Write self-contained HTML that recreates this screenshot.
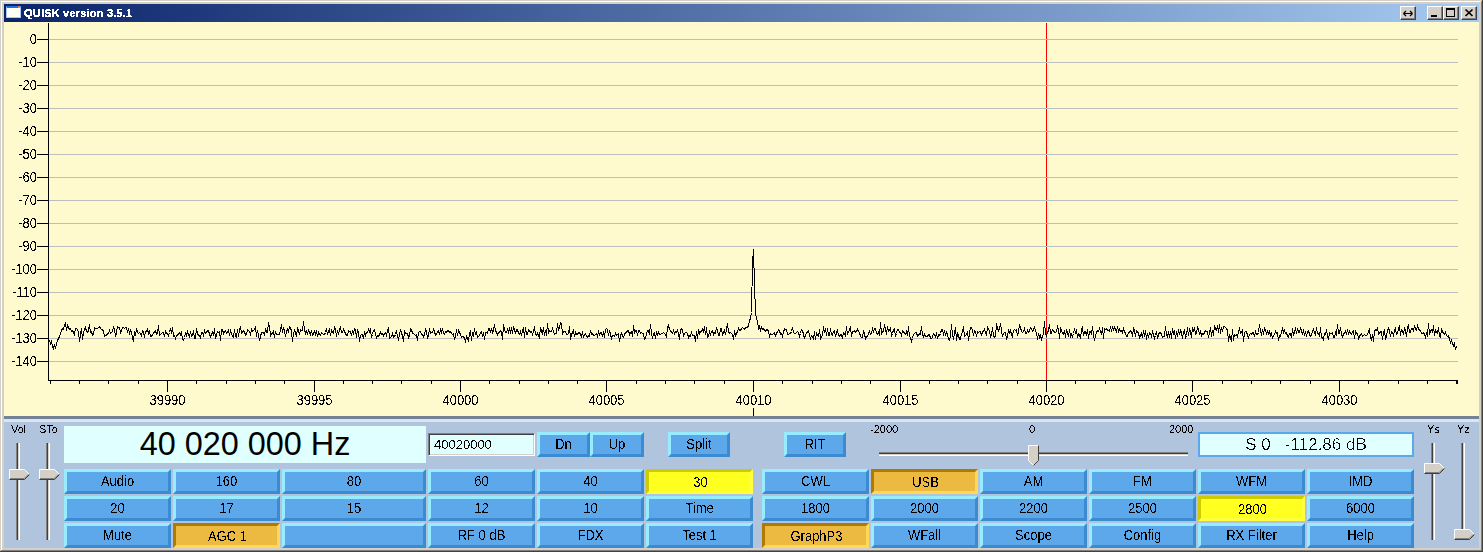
<!DOCTYPE html><html><head><meta charset="utf-8"><style>
*{margin:0;padding:0;box-sizing:border-box}
html,body{width:1483px;height:552px;overflow:hidden;background:#d4d0c8;font-family:"Liberation Sans",sans-serif}
.a{position:absolute}
.btn{position:absolute;height:25px;border:3px solid;border-color:#98ecff #3c8ad0 #3c8ad0 #98ecff;background:#5ca8ea;font-size:13px;line-height:19px;text-align:center;color:#000;white-space:nowrap;overflow:hidden}
.t{display:inline-block;transform:scaleY(1.11);filter:url(#th)}
.q{filter:url(#th)}
.chk .t,.cyc .t{position:relative;top:1px;left:1px}
.chk{border-color:#cccc00 #ffff40 #ffff40 #cccc00;background:#ffff20}
.cyc{border-color:#b07a00 #ffd858 #ffd858 #b07a00;background:#ecba40}
.lbl{position:absolute;font-size:11px;line-height:11px;color:#000;white-space:nowrap;filter:url(#th)}
.wb{position:absolute;top:6px;width:16px;height:14px;background:#d4d0c8;border-top:1px solid #fff;border-left:1px solid #fff;border-right:1px solid #404040;border-bottom:1px solid #404040;box-shadow:inset -1px -1px 0 #808080}
</style></head><body><svg width="0" height="0" style="position:absolute"><filter id="th" x="-10%" y="-10%" width="120%" height="120%"><feComponentTransfer><feFuncA type="discrete" tableValues="0 1"/></feComponentTransfer></filter><filter id="th3" x="-10%" y="-10%" width="120%" height="120%"><feComponentTransfer><feFuncA type="discrete" tableValues="0 1 1"/></feComponentTransfer></filter><filter id="th4" x="-10%" y="-10%" width="120%" height="120%"><feComponentTransfer><feFuncA type="discrete" tableValues="0 0 1"/></feComponentTransfer></filter></svg><div class="a" style="left:1px;top:1px;width:1480px;height:1px;background:#fff"></div>
<div class="a" style="left:1px;top:1px;width:1px;height:549px;background:#fff"></div>
<div class="a" style="left:1px;top:550px;width:1481px;height:1px;background:#808080"></div>
<div class="a" style="left:0;top:551px;width:1483px;height:1px;background:#404040"></div>
<div class="a" style="left:1481px;top:1px;width:1px;height:550px;background:#808080"></div>
<div class="a" style="left:1482px;top:0;width:1px;height:552px;background:#404040"></div>
<div class="a" style="left:4px;top:4px;width:1475px;height:18px;background:linear-gradient(to right,#0a246a,#a6caf0)"></div>
<div class="a" style="left:6px;top:6px;width:15px;height:12px;background:#fdfdf6;border:1px solid #a8c8f0;border-top:2px solid #1f6fe0"></div><div class="a" style="left:18px;top:6px;width:2px;height:2px;background:#f08040"></div>
<div class="a" style="left:24px;top:5px;font-size:11px;line-height:16px;font-weight:bold;color:#fff;letter-spacing:0.2px;white-space:nowrap;filter:url(#th3)">QUISK version 3.5.1</div>
<div class="wb" style="left:1400px"><svg width="14" height="12" style="position:absolute;left:0;top:0"><path d="M2.5 6.5H11.5M2.5 6.5L5 4M2.5 6.5L5 9M11.5 6.5L9 4M11.5 6.5L9 9" stroke="#000" stroke-width="1.2" fill="none"/></svg></div>
<div class="wb" style="left:1427px"><div class="a" style="left:3px;top:8px;width:6px;height:2px;background:#000"></div></div>
<div class="wb" style="left:1443px"><div class="a" style="left:2px;top:1px;width:9px;height:9px;border:1px solid #000;border-top:2px solid #000"></div></div>
<div class="wb" style="left:1461px"><svg width="14" height="12" style="position:absolute;left:0;top:0"><path d="M3.5 2.5L10.5 9M10.5 2.5L3.5 9" stroke="#000" stroke-width="1.7" fill="none"/></svg></div>
<div class="a" style="left:4px;top:22px;width:1475px;height:394px;background:#fffacd"></div>
<svg class="a" style="left:0;top:0" width="1483" height="416" shape-rendering="crispEdges"><rect x="1046" y="23" width="1" height="357" fill="#ff0000"/><rect x="49" y="39" width="1409" height="1" fill="#bebebe"/><rect x="37" y="39" width="11" height="1" fill="#000"/><rect x="49" y="62" width="1409" height="1" fill="#bebebe"/><rect x="37" y="62" width="11" height="1" fill="#000"/><rect x="49" y="85" width="1409" height="1" fill="#bebebe"/><rect x="37" y="85" width="11" height="1" fill="#000"/><rect x="49" y="108" width="1409" height="1" fill="#bebebe"/><rect x="37" y="108" width="11" height="1" fill="#000"/><rect x="49" y="131" width="1409" height="1" fill="#bebebe"/><rect x="37" y="131" width="11" height="1" fill="#000"/><rect x="49" y="154" width="1409" height="1" fill="#bebebe"/><rect x="37" y="154" width="11" height="1" fill="#000"/><rect x="49" y="177" width="1409" height="1" fill="#bebebe"/><rect x="37" y="177" width="11" height="1" fill="#000"/><rect x="49" y="200" width="1409" height="1" fill="#bebebe"/><rect x="37" y="200" width="11" height="1" fill="#000"/><rect x="49" y="223" width="1409" height="1" fill="#bebebe"/><rect x="37" y="223" width="11" height="1" fill="#000"/><rect x="49" y="246" width="1409" height="1" fill="#bebebe"/><rect x="37" y="246" width="11" height="1" fill="#000"/><rect x="49" y="269" width="1409" height="1" fill="#bebebe"/><rect x="37" y="269" width="11" height="1" fill="#000"/><rect x="49" y="292" width="1409" height="1" fill="#bebebe"/><rect x="37" y="292" width="11" height="1" fill="#000"/><rect x="49" y="315" width="1409" height="1" fill="#bebebe"/><rect x="37" y="315" width="11" height="1" fill="#000"/><rect x="49" y="338" width="1409" height="1" fill="#bebebe"/><rect x="37" y="338" width="11" height="1" fill="#000"/><rect x="49" y="361" width="1409" height="1" fill="#bebebe"/><rect x="37" y="361" width="11" height="1" fill="#000"/><rect x="48" y="23" width="1" height="358" fill="#000"/><rect x="48" y="380" width="1410" height="1" fill="#000"/><rect x="50" y="380" width="1" height="4" fill="#000"/><rect x="79" y="380" width="1" height="4" fill="#000"/><rect x="108" y="380" width="1" height="4" fill="#000"/><rect x="138" y="380" width="1" height="4" fill="#000"/><rect x="167" y="380" width="1" height="12" fill="#000"/><rect x="196" y="380" width="1" height="4" fill="#000"/><rect x="226" y="380" width="1" height="4" fill="#000"/><rect x="255" y="380" width="1" height="4" fill="#000"/><rect x="284" y="380" width="1" height="4" fill="#000"/><rect x="314" y="380" width="1" height="12" fill="#000"/><rect x="343" y="380" width="1" height="4" fill="#000"/><rect x="372" y="380" width="1" height="4" fill="#000"/><rect x="401" y="380" width="1" height="4" fill="#000"/><rect x="431" y="380" width="1" height="4" fill="#000"/><rect x="460" y="380" width="1" height="12" fill="#000"/><rect x="489" y="380" width="1" height="4" fill="#000"/><rect x="519" y="380" width="1" height="4" fill="#000"/><rect x="548" y="380" width="1" height="4" fill="#000"/><rect x="577" y="380" width="1" height="4" fill="#000"/><rect x="606" y="380" width="1" height="12" fill="#000"/><rect x="636" y="380" width="1" height="4" fill="#000"/><rect x="665" y="380" width="1" height="4" fill="#000"/><rect x="694" y="380" width="1" height="4" fill="#000"/><rect x="724" y="380" width="1" height="4" fill="#000"/><rect x="753" y="380" width="1" height="12" fill="#000"/><rect x="782" y="380" width="1" height="4" fill="#000"/><rect x="812" y="380" width="1" height="4" fill="#000"/><rect x="841" y="380" width="1" height="4" fill="#000"/><rect x="870" y="380" width="1" height="4" fill="#000"/><rect x="900" y="380" width="1" height="12" fill="#000"/><rect x="929" y="380" width="1" height="4" fill="#000"/><rect x="958" y="380" width="1" height="4" fill="#000"/><rect x="987" y="380" width="1" height="4" fill="#000"/><rect x="1017" y="380" width="1" height="4" fill="#000"/><rect x="1046" y="380" width="1" height="12" fill="#000"/><rect x="1075" y="380" width="1" height="4" fill="#000"/><rect x="1105" y="380" width="1" height="4" fill="#000"/><rect x="1134" y="380" width="1" height="4" fill="#000"/><rect x="1163" y="380" width="1" height="4" fill="#000"/><rect x="1192" y="380" width="1" height="12" fill="#000"/><rect x="1222" y="380" width="1" height="4" fill="#000"/><rect x="1251" y="380" width="1" height="4" fill="#000"/><rect x="1280" y="380" width="1" height="4" fill="#000"/><rect x="1310" y="380" width="1" height="4" fill="#000"/><rect x="1339" y="380" width="1" height="12" fill="#000"/><rect x="1368" y="380" width="1" height="4" fill="#000"/><rect x="1398" y="380" width="1" height="4" fill="#000"/><rect x="1427" y="380" width="1" height="4" fill="#000"/><rect x="1456" y="380" width="1" height="4" fill="#000"/><rect x="1457" y="380" width="1" height="4" fill="#000"/><rect x="753" y="408" width="1" height="8" fill="#000"/><path d="M49.5 340.5 L50.5 343.5 L51.5 341.5 L52.5 346.5 L53.5 348.5 L54.5 344.5 L55.5 348.5 L56.5 343.5 L57.5 340.5 L58.5 338.5 L59.5 336.5 L60.5 333.5 L61.5 330.5 L62.5 328.5 L63.5 329.5 L64.5 325.5 L65.5 323.5 L66.5 330.5 L67.5 325.5 L68.5 327.5 L69.5 329.5 L70.5 328.5 L71.5 331.5 L72.5 330.5 L73.5 332.5 L74.5 334.5 L75.5 328.5 L76.5 328.5 L77.5 329.5 L78.5 332.5 L79.5 341.5 L80.5 334.5 L81.5 328.5 L82.5 339.5 L83.5 332.5 L84.5 329.5 L85.5 327.5 L86.5 331.5 L87.5 332.5 L88.5 330.5 L89.5 324.5 L90.5 332.5 L91.5 331.5 L92.5 335.5 L93.5 334.5 L94.5 327.5 L95.5 328.5 L96.5 328.5 L97.5 328.5 L98.5 327.5 L99.5 326.5 L100.5 328.5 L101.5 329.5 L102.5 329.5 L103.5 331.5 L104.5 336.5 L105.5 335.5 L106.5 335.5 L107.5 333.5 L108.5 333.5 L109.5 330.5 L110.5 333.5 L111.5 332.5 L112.5 331.5 L113.5 327.5 L114.5 329.5 L115.5 336.5 L116.5 332.5 L117.5 326.5 L118.5 327.5 L119.5 327.5 L120.5 332.5 L121.5 330.5 L122.5 327.5 L123.5 327.5 L124.5 328.5 L125.5 327.5 L126.5 327.5 L127.5 332.5 L128.5 328.5 L129.5 333.5 L130.5 330.5 L131.5 332.5 L132.5 337.5 L133.5 341.5 L134.5 331.5 L135.5 335.5 L136.5 328.5 L137.5 332.5 L138.5 333.5 L139.5 332.5 L140.5 333.5 L141.5 335.5 L142.5 330.5 L143.5 331.5 L144.5 337.5 L145.5 331.5 L146.5 331.5 L147.5 329.5 L148.5 333.5 L149.5 331.5 L150.5 336.5 L151.5 336.5 L152.5 334.5 L153.5 333.5 L154.5 331.5 L155.5 330.5 L156.5 334.5 L157.5 333.5 L158.5 325.5 L159.5 335.5 L160.5 334.5 L161.5 333.5 L162.5 332.5 L163.5 332.5 L164.5 336.5 L165.5 331.5 L166.5 333.5 L167.5 333.5 L168.5 335.5 L169.5 332.5 L170.5 328.5 L171.5 333.5 L172.5 327.5 L173.5 336.5 L174.5 335.5 L175.5 338.5 L176.5 335.5 L177.5 335.5 L178.5 333.5 L179.5 332.5 L180.5 334.5 L181.5 331.5 L182.5 339.5 L183.5 340.5 L184.5 337.5 L185.5 333.5 L186.5 335.5 L187.5 331.5 L188.5 334.5 L189.5 337.5 L190.5 331.5 L191.5 336.5 L192.5 335.5 L193.5 330.5 L194.5 338.5 L195.5 338.5 L196.5 328.5 L197.5 333.5 L198.5 335.5 L199.5 335.5 L200.5 337.5 L201.5 332.5 L202.5 332.5 L203.5 335.5 L204.5 330.5 L205.5 333.5 L206.5 332.5 L207.5 330.5 L208.5 330.5 L209.5 334.5 L210.5 336.5 L211.5 334.5 L212.5 332.5 L213.5 335.5 L214.5 328.5 L215.5 338.5 L216.5 334.5 L217.5 331.5 L218.5 332.5 L219.5 331.5 L220.5 340.5 L221.5 329.5 L222.5 329.5 L223.5 333.5 L224.5 331.5 L225.5 330.5 L226.5 333.5 L227.5 332.5 L228.5 330.5 L229.5 335.5 L230.5 330.5 L231.5 333.5 L232.5 336.5 L233.5 337.5 L234.5 329.5 L235.5 336.5 L236.5 337.5 L237.5 329.5 L238.5 336.5 L239.5 330.5 L240.5 326.5 L241.5 333.5 L242.5 332.5 L243.5 330.5 L244.5 331.5 L245.5 335.5 L246.5 334.5 L247.5 329.5 L248.5 330.5 L249.5 331.5 L250.5 334.5 L251.5 329.5 L252.5 331.5 L253.5 330.5 L254.5 329.5 L255.5 326.5 L256.5 336.5 L257.5 330.5 L258.5 334.5 L259.5 340.5 L260.5 336.5 L261.5 332.5 L262.5 332.5 L263.5 332.5 L264.5 335.5 L265.5 328.5 L266.5 332.5 L267.5 332.5 L268.5 322.5 L269.5 326.5 L270.5 335.5 L271.5 333.5 L272.5 333.5 L273.5 331.5 L274.5 337.5 L275.5 331.5 L276.5 334.5 L277.5 334.5 L278.5 334.5 L279.5 334.5 L280.5 329.5 L281.5 324.5 L282.5 332.5 L283.5 327.5 L284.5 331.5 L285.5 336.5 L286.5 331.5 L287.5 329.5 L288.5 332.5 L289.5 326.5 L290.5 327.5 L291.5 331.5 L292.5 341.5 L293.5 333.5 L294.5 330.5 L295.5 332.5 L296.5 336.5 L297.5 328.5 L298.5 330.5 L299.5 334.5 L300.5 329.5 L301.5 330.5 L302.5 330.5 L303.5 321.5 L304.5 329.5 L305.5 333.5 L306.5 331.5 L307.5 333.5 L308.5 330.5 L309.5 332.5 L310.5 334.5 L311.5 330.5 L312.5 335.5 L313.5 334.5 L314.5 330.5 L315.5 334.5 L316.5 331.5 L317.5 336.5 L318.5 332.5 L319.5 334.5 L320.5 335.5 L321.5 332.5 L322.5 333.5 L323.5 334.5 L324.5 334.5 L325.5 332.5 L326.5 328.5 L327.5 334.5 L328.5 331.5 L329.5 329.5 L330.5 335.5 L331.5 330.5 L332.5 332.5 L333.5 333.5 L334.5 327.5 L335.5 329.5 L336.5 336.5 L337.5 330.5 L338.5 334.5 L339.5 329.5 L340.5 326.5 L341.5 332.5 L342.5 332.5 L343.5 329.5 L344.5 331.5 L345.5 333.5 L346.5 335.5 L347.5 335.5 L348.5 330.5 L349.5 331.5 L350.5 331.5 L351.5 335.5 L352.5 330.5 L353.5 334.5 L354.5 328.5 L355.5 329.5 L356.5 337.5 L357.5 329.5 L358.5 332.5 L359.5 341.5 L360.5 335.5 L361.5 334.5 L362.5 334.5 L363.5 338.5 L364.5 331.5 L365.5 335.5 L366.5 332.5 L367.5 332.5 L368.5 329.5 L369.5 331.5 L370.5 329.5 L371.5 337.5 L372.5 334.5 L373.5 330.5 L374.5 329.5 L375.5 334.5 L376.5 337.5 L377.5 335.5 L378.5 336.5 L379.5 334.5 L380.5 332.5 L381.5 334.5 L382.5 333.5 L383.5 335.5 L384.5 333.5 L385.5 332.5 L386.5 335.5 L387.5 331.5 L388.5 327.5 L389.5 338.5 L390.5 337.5 L391.5 336.5 L392.5 333.5 L393.5 337.5 L394.5 336.5 L395.5 334.5 L396.5 330.5 L397.5 336.5 L398.5 339.5 L399.5 334.5 L400.5 329.5 L401.5 333.5 L402.5 335.5 L403.5 341.5 L404.5 331.5 L405.5 333.5 L406.5 333.5 L407.5 333.5 L408.5 337.5 L409.5 335.5 L410.5 328.5 L411.5 329.5 L412.5 333.5 L413.5 333.5 L414.5 334.5 L415.5 335.5 L416.5 334.5 L417.5 340.5 L418.5 332.5 L419.5 331.5 L420.5 331.5 L421.5 334.5 L422.5 334.5 L423.5 336.5 L424.5 334.5 L425.5 329.5 L426.5 331.5 L427.5 337.5 L428.5 335.5 L429.5 328.5 L430.5 333.5 L431.5 332.5 L432.5 332.5 L433.5 329.5 L434.5 331.5 L435.5 335.5 L436.5 334.5 L437.5 331.5 L438.5 330.5 L439.5 334.5 L440.5 329.5 L441.5 332.5 L442.5 328.5 L443.5 333.5 L444.5 334.5 L445.5 331.5 L446.5 332.5 L447.5 330.5 L448.5 330.5 L449.5 332.5 L450.5 331.5 L451.5 333.5 L452.5 334.5 L453.5 333.5 L454.5 339.5 L455.5 336.5 L456.5 329.5 L457.5 335.5 L458.5 330.5 L459.5 332.5 L460.5 334.5 L461.5 337.5 L462.5 336.5 L463.5 336.5 L464.5 338.5 L465.5 341.5 L466.5 336.5 L467.5 338.5 L468.5 340.5 L469.5 333.5 L470.5 330.5 L471.5 340.5 L472.5 332.5 L473.5 336.5 L474.5 328.5 L475.5 334.5 L476.5 331.5 L477.5 337.5 L478.5 336.5 L479.5 335.5 L480.5 332.5 L481.5 331.5 L482.5 336.5 L483.5 332.5 L484.5 339.5 L485.5 332.5 L486.5 332.5 L487.5 333.5 L488.5 328.5 L489.5 328.5 L490.5 332.5 L491.5 328.5 L492.5 332.5 L493.5 330.5 L494.5 324.5 L495.5 330.5 L496.5 332.5 L497.5 334.5 L498.5 332.5 L499.5 332.5 L500.5 330.5 L501.5 331.5 L502.5 339.5 L503.5 324.5 L504.5 329.5 L505.5 332.5 L506.5 332.5 L507.5 329.5 L508.5 332.5 L509.5 327.5 L510.5 333.5 L511.5 327.5 L512.5 333.5 L513.5 327.5 L514.5 329.5 L515.5 333.5 L516.5 329.5 L517.5 329.5 L518.5 333.5 L519.5 334.5 L520.5 331.5 L521.5 335.5 L522.5 330.5 L523.5 328.5 L524.5 337.5 L525.5 327.5 L526.5 334.5 L527.5 334.5 L528.5 329.5 L529.5 330.5 L530.5 332.5 L531.5 331.5 L532.5 334.5 L533.5 331.5 L534.5 326.5 L535.5 334.5 L536.5 335.5 L537.5 333.5 L538.5 335.5 L539.5 337.5 L540.5 327.5 L541.5 331.5 L542.5 333.5 L543.5 327.5 L544.5 335.5 L545.5 330.5 L546.5 335.5 L547.5 323.5 L548.5 332.5 L549.5 330.5 L550.5 331.5 L551.5 331.5 L552.5 328.5 L553.5 331.5 L554.5 334.5 L555.5 333.5 L556.5 333.5 L557.5 323.5 L558.5 329.5 L559.5 327.5 L560.5 322.5 L561.5 323.5 L562.5 334.5 L563.5 331.5 L564.5 331.5 L565.5 331.5 L566.5 334.5 L567.5 334.5 L568.5 333.5 L569.5 326.5 L570.5 339.5 L571.5 334.5 L572.5 332.5 L573.5 330.5 L574.5 336.5 L575.5 332.5 L576.5 334.5 L577.5 334.5 L578.5 332.5 L579.5 332.5 L580.5 334.5 L581.5 336.5 L582.5 331.5 L583.5 337.5 L584.5 334.5 L585.5 333.5 L586.5 336.5 L587.5 337.5 L588.5 335.5 L589.5 336.5 L590.5 330.5 L591.5 334.5 L592.5 333.5 L593.5 335.5 L594.5 335.5 L595.5 334.5 L596.5 333.5 L597.5 336.5 L598.5 331.5 L599.5 334.5 L600.5 332.5 L601.5 332.5 L602.5 336.5 L603.5 331.5 L604.5 337.5 L605.5 329.5 L606.5 328.5 L607.5 329.5 L608.5 335.5 L609.5 330.5 L610.5 334.5 L611.5 338.5 L612.5 335.5 L613.5 335.5 L614.5 336.5 L615.5 333.5 L616.5 335.5 L617.5 334.5 L618.5 333.5 L619.5 341.5 L620.5 336.5 L621.5 332.5 L622.5 336.5 L623.5 337.5 L624.5 334.5 L625.5 332.5 L626.5 332.5 L627.5 330.5 L628.5 330.5 L629.5 334.5 L630.5 332.5 L631.5 331.5 L632.5 336.5 L633.5 325.5 L634.5 332.5 L635.5 330.5 L636.5 330.5 L637.5 335.5 L638.5 330.5 L639.5 330.5 L640.5 333.5 L641.5 332.5 L642.5 333.5 L643.5 333.5 L644.5 339.5 L645.5 338.5 L646.5 333.5 L647.5 330.5 L648.5 330.5 L649.5 334.5 L650.5 324.5 L651.5 333.5 L652.5 338.5 L653.5 333.5 L654.5 332.5 L655.5 338.5 L656.5 332.5 L657.5 334.5 L658.5 332.5 L659.5 334.5 L660.5 334.5 L661.5 333.5 L662.5 333.5 L663.5 332.5 L664.5 333.5 L665.5 334.5 L666.5 336.5 L667.5 327.5 L668.5 325.5 L669.5 329.5 L670.5 330.5 L671.5 332.5 L672.5 333.5 L673.5 330.5 L674.5 333.5 L675.5 331.5 L676.5 332.5 L677.5 330.5 L678.5 333.5 L679.5 339.5 L680.5 329.5 L681.5 328.5 L682.5 330.5 L683.5 335.5 L684.5 333.5 L685.5 332.5 L686.5 332.5 L687.5 333.5 L688.5 337.5 L689.5 335.5 L690.5 336.5 L691.5 332.5 L692.5 335.5 L693.5 335.5 L694.5 335.5 L695.5 341.5 L696.5 331.5 L697.5 338.5 L698.5 329.5 L699.5 333.5 L700.5 331.5 L701.5 331.5 L702.5 329.5 L703.5 332.5 L704.5 326.5 L705.5 334.5 L706.5 327.5 L707.5 337.5 L708.5 336.5 L709.5 331.5 L710.5 334.5 L711.5 331.5 L712.5 330.5 L713.5 334.5 L714.5 332.5 L715.5 333.5 L716.5 327.5 L717.5 330.5 L718.5 335.5 L719.5 335.5 L720.5 328.5 L721.5 328.5 L722.5 334.5 L723.5 332.5 L724.5 330.5 L725.5 334.5 L726.5 329.5 L727.5 323.5 L728.5 331.5 L729.5 333.5 L730.5 332.5 L731.5 333.5 L732.5 334.5 L733.5 339.5 L734.5 330.5 L735.5 335.5 L736.5 333.5 L737.5 331.5 L738.5 328.5 L739.5 330.5 L740.5 330.5 L741.5 328.5 L742.5 327.5 L743.5 328.5 L744.5 329.5 L745.5 327.5 L746.5 327.5 L747.5 327.5 L748.5 325.5 L749.5 320.5 L750.5 318.5 L751.5 312.5 L752.5 262.5 L753.5 249.5 L754.5 284.5 L755.5 312.5 L756.5 318.5 L757.5 321.5 L758.5 328.5 L759.5 326.5 L760.5 330.5 L761.5 327.5 L762.5 329.5 L763.5 328.5 L764.5 330.5 L765.5 331.5 L766.5 329.5 L767.5 329.5 L768.5 331.5 L769.5 336.5 L770.5 333.5 L771.5 334.5 L772.5 334.5 L773.5 333.5 L774.5 332.5 L775.5 336.5 L776.5 332.5 L777.5 332.5 L778.5 329.5 L779.5 330.5 L780.5 334.5 L781.5 333.5 L782.5 336.5 L783.5 332.5 L784.5 328.5 L785.5 329.5 L786.5 329.5 L787.5 334.5 L788.5 334.5 L789.5 333.5 L790.5 333.5 L791.5 331.5 L792.5 327.5 L793.5 332.5 L794.5 333.5 L795.5 333.5 L796.5 332.5 L797.5 331.5 L798.5 332.5 L799.5 336.5 L800.5 333.5 L801.5 329.5 L802.5 330.5 L803.5 334.5 L804.5 338.5 L805.5 334.5 L806.5 333.5 L807.5 331.5 L808.5 330.5 L809.5 335.5 L810.5 338.5 L811.5 335.5 L812.5 336.5 L813.5 338.5 L814.5 331.5 L815.5 339.5 L816.5 333.5 L817.5 335.5 L818.5 336.5 L819.5 329.5 L820.5 338.5 L821.5 336.5 L822.5 335.5 L823.5 326.5 L824.5 332.5 L825.5 328.5 L826.5 335.5 L827.5 328.5 L828.5 335.5 L829.5 335.5 L830.5 328.5 L831.5 334.5 L832.5 335.5 L833.5 331.5 L834.5 330.5 L835.5 336.5 L836.5 332.5 L837.5 330.5 L838.5 335.5 L839.5 336.5 L840.5 334.5 L841.5 334.5 L842.5 338.5 L843.5 332.5 L844.5 333.5 L845.5 335.5 L846.5 326.5 L847.5 334.5 L848.5 331.5 L849.5 330.5 L850.5 326.5 L851.5 336.5 L852.5 331.5 L853.5 331.5 L854.5 330.5 L855.5 332.5 L856.5 331.5 L857.5 329.5 L858.5 331.5 L859.5 332.5 L860.5 336.5 L861.5 337.5 L862.5 337.5 L863.5 330.5 L864.5 334.5 L865.5 338.5 L866.5 336.5 L867.5 336.5 L868.5 333.5 L869.5 331.5 L870.5 334.5 L871.5 333.5 L872.5 328.5 L873.5 331.5 L874.5 328.5 L875.5 328.5 L876.5 333.5 L877.5 334.5 L878.5 332.5 L879.5 335.5 L880.5 322.5 L881.5 333.5 L882.5 331.5 L883.5 331.5 L884.5 324.5 L885.5 329.5 L886.5 334.5 L887.5 326.5 L888.5 331.5 L889.5 330.5 L890.5 327.5 L891.5 335.5 L892.5 333.5 L893.5 329.5 L894.5 328.5 L895.5 336.5 L896.5 333.5 L897.5 329.5 L898.5 329.5 L899.5 332.5 L900.5 332.5 L901.5 335.5 L902.5 330.5 L903.5 331.5 L904.5 333.5 L905.5 334.5 L906.5 331.5 L907.5 335.5 L908.5 326.5 L909.5 336.5 L910.5 337.5 L911.5 341.5 L912.5 338.5 L913.5 334.5 L914.5 333.5 L915.5 332.5 L916.5 332.5 L917.5 336.5 L918.5 335.5 L919.5 333.5 L920.5 334.5 L921.5 326.5 L922.5 334.5 L923.5 336.5 L924.5 334.5 L925.5 336.5 L926.5 336.5 L927.5 336.5 L928.5 334.5 L929.5 334.5 L930.5 338.5 L931.5 338.5 L932.5 337.5 L933.5 333.5 L934.5 334.5 L935.5 336.5 L936.5 333.5 L937.5 338.5 L938.5 334.5 L939.5 335.5 L940.5 333.5 L941.5 329.5 L942.5 329.5 L943.5 334.5 L944.5 331.5 L945.5 334.5 L946.5 332.5 L947.5 334.5 L948.5 339.5 L949.5 340.5 L950.5 335.5 L951.5 324.5 L952.5 334.5 L953.5 339.5 L954.5 333.5 L955.5 327.5 L956.5 340.5 L957.5 333.5 L958.5 335.5 L959.5 339.5 L960.5 339.5 L961.5 333.5 L962.5 332.5 L963.5 326.5 L964.5 336.5 L965.5 335.5 L966.5 334.5 L967.5 331.5 L968.5 340.5 L969.5 333.5 L970.5 327.5 L971.5 327.5 L972.5 330.5 L973.5 335.5 L974.5 330.5 L975.5 331.5 L976.5 336.5 L977.5 331.5 L978.5 332.5 L979.5 331.5 L980.5 331.5 L981.5 335.5 L982.5 331.5 L983.5 331.5 L984.5 329.5 L985.5 332.5 L986.5 335.5 L987.5 327.5 L988.5 329.5 L989.5 330.5 L990.5 336.5 L991.5 334.5 L992.5 327.5 L993.5 335.5 L994.5 337.5 L995.5 336.5 L996.5 323.5 L997.5 328.5 L998.5 330.5 L999.5 328.5 L1000.5 323.5 L1001.5 330.5 L1002.5 336.5 L1003.5 333.5 L1004.5 332.5 L1005.5 332.5 L1006.5 338.5 L1007.5 336.5 L1008.5 329.5 L1009.5 332.5 L1010.5 330.5 L1011.5 334.5 L1012.5 336.5 L1013.5 330.5 L1014.5 329.5 L1015.5 330.5 L1016.5 329.5 L1017.5 335.5 L1018.5 331.5 L1019.5 325.5 L1020.5 327.5 L1021.5 331.5 L1022.5 332.5 L1023.5 331.5 L1024.5 328.5 L1025.5 333.5 L1026.5 333.5 L1027.5 330.5 L1028.5 332.5 L1029.5 331.5 L1030.5 327.5 L1031.5 328.5 L1032.5 331.5 L1033.5 330.5 L1034.5 326.5 L1035.5 331.5 L1036.5 332.5 L1037.5 339.5 L1038.5 333.5 L1039.5 337.5 L1040.5 335.5 L1041.5 339.5 L1042.5 336.5 L1043.5 333.5 L1044.5 321.5 L1045.5 333.5 L1046.5 335.5 L1047.5 332.5 L1048.5 330.5 L1049.5 324.5 L1050.5 333.5 L1051.5 333.5 L1052.5 329.5 L1053.5 330.5 L1054.5 332.5 L1055.5 332.5 L1056.5 331.5 L1057.5 326.5 L1058.5 329.5 L1059.5 338.5 L1060.5 328.5 L1061.5 330.5 L1062.5 333.5 L1063.5 334.5 L1064.5 330.5 L1065.5 337.5 L1066.5 329.5 L1067.5 332.5 L1068.5 336.5 L1069.5 329.5 L1070.5 336.5 L1071.5 334.5 L1072.5 336.5 L1073.5 333.5 L1074.5 329.5 L1075.5 332.5 L1076.5 330.5 L1077.5 337.5 L1078.5 333.5 L1079.5 334.5 L1080.5 338.5 L1081.5 329.5 L1082.5 327.5 L1083.5 335.5 L1084.5 331.5 L1085.5 331.5 L1086.5 335.5 L1087.5 329.5 L1088.5 338.5 L1089.5 331.5 L1090.5 331.5 L1091.5 333.5 L1092.5 326.5 L1093.5 334.5 L1094.5 340.5 L1095.5 335.5 L1096.5 332.5 L1097.5 330.5 L1098.5 331.5 L1099.5 328.5 L1100.5 331.5 L1101.5 334.5 L1102.5 327.5 L1103.5 338.5 L1104.5 328.5 L1105.5 329.5 L1106.5 328.5 L1107.5 330.5 L1108.5 330.5 L1109.5 331.5 L1110.5 327.5 L1111.5 330.5 L1112.5 327.5 L1113.5 329.5 L1114.5 327.5 L1115.5 329.5 L1116.5 331.5 L1117.5 326.5 L1118.5 331.5 L1119.5 329.5 L1120.5 331.5 L1121.5 330.5 L1122.5 332.5 L1123.5 328.5 L1124.5 331.5 L1125.5 333.5 L1126.5 336.5 L1127.5 336.5 L1128.5 332.5 L1129.5 332.5 L1130.5 330.5 L1131.5 331.5 L1132.5 336.5 L1133.5 328.5 L1134.5 330.5 L1135.5 336.5 L1136.5 330.5 L1137.5 331.5 L1138.5 333.5 L1139.5 337.5 L1140.5 335.5 L1141.5 333.5 L1142.5 337.5 L1143.5 330.5 L1144.5 336.5 L1145.5 330.5 L1146.5 339.5 L1147.5 333.5 L1148.5 337.5 L1149.5 332.5 L1150.5 333.5 L1151.5 336.5 L1152.5 331.5 L1153.5 334.5 L1154.5 338.5 L1155.5 335.5 L1156.5 331.5 L1157.5 338.5 L1158.5 334.5 L1159.5 332.5 L1160.5 332.5 L1161.5 334.5 L1162.5 337.5 L1163.5 336.5 L1164.5 336.5 L1165.5 326.5 L1166.5 334.5 L1167.5 337.5 L1168.5 331.5 L1169.5 337.5 L1170.5 331.5 L1171.5 338.5 L1172.5 328.5 L1173.5 333.5 L1174.5 331.5 L1175.5 338.5 L1176.5 331.5 L1177.5 336.5 L1178.5 329.5 L1179.5 334.5 L1180.5 330.5 L1181.5 332.5 L1182.5 338.5 L1183.5 332.5 L1184.5 329.5 L1185.5 337.5 L1186.5 335.5 L1187.5 327.5 L1188.5 335.5 L1189.5 328.5 L1190.5 331.5 L1191.5 337.5 L1192.5 327.5 L1193.5 330.5 L1194.5 327.5 L1195.5 334.5 L1196.5 333.5 L1197.5 326.5 L1198.5 330.5 L1199.5 333.5 L1200.5 331.5 L1201.5 335.5 L1202.5 333.5 L1203.5 334.5 L1204.5 332.5 L1205.5 330.5 L1206.5 331.5 L1207.5 331.5 L1208.5 337.5 L1209.5 332.5 L1210.5 327.5 L1211.5 336.5 L1212.5 330.5 L1213.5 335.5 L1214.5 325.5 L1215.5 329.5 L1216.5 330.5 L1217.5 325.5 L1218.5 332.5 L1219.5 324.5 L1220.5 333.5 L1221.5 327.5 L1222.5 331.5 L1223.5 326.5 L1224.5 326.5 L1225.5 327.5 L1226.5 328.5 L1227.5 330.5 L1228.5 341.5 L1229.5 334.5 L1230.5 337.5 L1231.5 341.5 L1232.5 329.5 L1233.5 340.5 L1234.5 334.5 L1235.5 335.5 L1236.5 334.5 L1237.5 336.5 L1238.5 331.5 L1239.5 328.5 L1240.5 333.5 L1241.5 332.5 L1242.5 330.5 L1243.5 341.5 L1244.5 332.5 L1245.5 331.5 L1246.5 331.5 L1247.5 335.5 L1248.5 337.5 L1249.5 334.5 L1250.5 333.5 L1251.5 334.5 L1252.5 332.5 L1253.5 332.5 L1254.5 336.5 L1255.5 331.5 L1256.5 334.5 L1257.5 334.5 L1258.5 332.5 L1259.5 324.5 L1260.5 330.5 L1261.5 335.5 L1262.5 329.5 L1263.5 334.5 L1264.5 328.5 L1265.5 330.5 L1266.5 333.5 L1267.5 331.5 L1268.5 333.5 L1269.5 331.5 L1270.5 335.5 L1271.5 332.5 L1272.5 338.5 L1273.5 335.5 L1274.5 334.5 L1275.5 331.5 L1276.5 333.5 L1277.5 332.5 L1278.5 340.5 L1279.5 335.5 L1280.5 336.5 L1281.5 331.5 L1282.5 328.5 L1283.5 332.5 L1284.5 330.5 L1285.5 333.5 L1286.5 332.5 L1287.5 336.5 L1288.5 337.5 L1289.5 333.5 L1290.5 333.5 L1291.5 337.5 L1292.5 328.5 L1293.5 335.5 L1294.5 331.5 L1295.5 328.5 L1296.5 333.5 L1297.5 328.5 L1298.5 332.5 L1299.5 332.5 L1300.5 328.5 L1301.5 330.5 L1302.5 334.5 L1303.5 329.5 L1304.5 335.5 L1305.5 331.5 L1306.5 336.5 L1307.5 331.5 L1308.5 330.5 L1309.5 334.5 L1310.5 336.5 L1311.5 335.5 L1312.5 331.5 L1313.5 329.5 L1314.5 332.5 L1315.5 334.5 L1316.5 327.5 L1317.5 333.5 L1318.5 333.5 L1319.5 336.5 L1320.5 327.5 L1321.5 337.5 L1322.5 337.5 L1323.5 339.5 L1324.5 333.5 L1325.5 334.5 L1326.5 329.5 L1327.5 335.5 L1328.5 339.5 L1329.5 332.5 L1330.5 333.5 L1331.5 333.5 L1332.5 332.5 L1333.5 337.5 L1334.5 337.5 L1335.5 332.5 L1336.5 334.5 L1337.5 324.5 L1338.5 333.5 L1339.5 333.5 L1340.5 327.5 L1341.5 333.5 L1342.5 337.5 L1343.5 333.5 L1344.5 333.5 L1345.5 331.5 L1346.5 333.5 L1347.5 330.5 L1348.5 333.5 L1349.5 331.5 L1350.5 333.5 L1351.5 334.5 L1352.5 331.5 L1353.5 330.5 L1354.5 338.5 L1355.5 331.5 L1356.5 333.5 L1357.5 333.5 L1358.5 338.5 L1359.5 336.5 L1360.5 334.5 L1361.5 333.5 L1362.5 336.5 L1363.5 335.5 L1364.5 334.5 L1365.5 335.5 L1366.5 335.5 L1367.5 334.5 L1368.5 331.5 L1369.5 329.5 L1370.5 337.5 L1371.5 340.5 L1372.5 334.5 L1373.5 341.5 L1374.5 331.5 L1375.5 329.5 L1376.5 330.5 L1377.5 327.5 L1378.5 334.5 L1379.5 333.5 L1380.5 331.5 L1381.5 331.5 L1382.5 339.5 L1383.5 332.5 L1384.5 330.5 L1385.5 339.5 L1386.5 336.5 L1387.5 330.5 L1388.5 328.5 L1389.5 330.5 L1390.5 336.5 L1391.5 331.5 L1392.5 332.5 L1393.5 335.5 L1394.5 330.5 L1395.5 328.5 L1396.5 334.5 L1397.5 333.5 L1398.5 328.5 L1399.5 326.5 L1400.5 335.5 L1401.5 329.5 L1402.5 330.5 L1403.5 334.5 L1404.5 328.5 L1405.5 330.5 L1406.5 336.5 L1407.5 327.5 L1408.5 325.5 L1409.5 332.5 L1410.5 332.5 L1411.5 328.5 L1412.5 328.5 L1413.5 330.5 L1414.5 325.5 L1415.5 329.5 L1416.5 330.5 L1417.5 325.5 L1418.5 328.5 L1419.5 330.5 L1420.5 330.5 L1421.5 333.5 L1422.5 333.5 L1423.5 332.5 L1424.5 334.5 L1425.5 337.5 L1426.5 333.5 L1427.5 335.5 L1428.5 323.5 L1429.5 334.5 L1430.5 330.5 L1431.5 329.5 L1432.5 332.5 L1433.5 325.5 L1434.5 335.5 L1435.5 330.5 L1436.5 332.5 L1437.5 333.5 L1438.5 327.5 L1439.5 336.5 L1440.5 337.5 L1441.5 329.5 L1442.5 331.5 L1443.5 333.5 L1444.5 334.5 L1445.5 332.5 L1446.5 335.5 L1447.5 336.5 L1448.5 335.5 L1449.5 339.5 L1450.5 342.5 L1451.5 340.5 L1452.5 343.5 L1453.5 345.5 L1454.5 343.5 L1455.5 349.5 L1456.5 346.5" stroke="#000" stroke-width="1" fill="none"/><g filter="url(#th)"><text transform="translate(37,44) scale(1,1.11)" text-anchor="end" font-size="13" font-family="Liberation Sans">0</text><text transform="translate(37,67) scale(1,1.11)" text-anchor="end" font-size="13" font-family="Liberation Sans">-10</text><text transform="translate(37,90) scale(1,1.11)" text-anchor="end" font-size="13" font-family="Liberation Sans">-20</text><text transform="translate(37,113) scale(1,1.11)" text-anchor="end" font-size="13" font-family="Liberation Sans">-30</text><text transform="translate(37,136) scale(1,1.11)" text-anchor="end" font-size="13" font-family="Liberation Sans">-40</text><text transform="translate(37,159) scale(1,1.11)" text-anchor="end" font-size="13" font-family="Liberation Sans">-50</text><text transform="translate(37,182) scale(1,1.11)" text-anchor="end" font-size="13" font-family="Liberation Sans">-60</text><text transform="translate(37,205) scale(1,1.11)" text-anchor="end" font-size="13" font-family="Liberation Sans">-70</text><text transform="translate(37,228) scale(1,1.11)" text-anchor="end" font-size="13" font-family="Liberation Sans">-80</text><text transform="translate(37,251) scale(1,1.11)" text-anchor="end" font-size="13" font-family="Liberation Sans">-90</text><text transform="translate(37,274) scale(1,1.11)" text-anchor="end" font-size="13" font-family="Liberation Sans">-100</text><text transform="translate(37,297) scale(1,1.11)" text-anchor="end" font-size="13" font-family="Liberation Sans">-110</text><text transform="translate(37,320) scale(1,1.11)" text-anchor="end" font-size="13" font-family="Liberation Sans">-120</text><text transform="translate(37,343) scale(1,1.11)" text-anchor="end" font-size="13" font-family="Liberation Sans">-130</text><text transform="translate(37,366) scale(1,1.11)" text-anchor="end" font-size="13" font-family="Liberation Sans">-140</text><text transform="translate(167.5,405) scale(1,1.11)" text-anchor="middle" font-size="13" font-family="Liberation Sans">39990</text><text transform="translate(314.5,405) scale(1,1.11)" text-anchor="middle" font-size="13" font-family="Liberation Sans">39995</text><text transform="translate(460.5,405) scale(1,1.11)" text-anchor="middle" font-size="13" font-family="Liberation Sans">40000</text><text transform="translate(606.5,405) scale(1,1.11)" text-anchor="middle" font-size="13" font-family="Liberation Sans">40005</text><text transform="translate(753.5,405) scale(1,1.11)" text-anchor="middle" font-size="13" font-family="Liberation Sans">40010</text><text transform="translate(900.5,405) scale(1,1.11)" text-anchor="middle" font-size="13" font-family="Liberation Sans">40015</text><text transform="translate(1046.5,405) scale(1,1.11)" text-anchor="middle" font-size="13" font-family="Liberation Sans">40020</text><text transform="translate(1192.5,405) scale(1,1.11)" text-anchor="middle" font-size="13" font-family="Liberation Sans">40025</text><text transform="translate(1339.5,405) scale(1,1.11)" text-anchor="middle" font-size="13" font-family="Liberation Sans">40030</text></g></svg>
<div class="a" style="left:4px;top:416px;width:1475px;height:3px;background:#738297"></div>
<div class="a" style="left:4px;top:419px;width:1475px;height:3px;background:#dce4f0"></div>
<div class="a" style="left:4px;top:422px;width:1475px;height:126px;background:#b0c4de"></div>
<div class="lbl" style="left:11px;top:424px">Vol</div>
<div class="lbl" style="left:39px;top:424px">STo</div>
<div class="a" style="left:16px;top:443px;width:1px;height:97px;background:#808080"></div>
<div class="a" style="left:17px;top:443px;width:1px;height:97px;background:#404040"></div>
<div class="a" style="left:18px;top:443px;width:1px;height:97px;background:#d4d0c8"></div>
<div class="a" style="left:19px;top:443px;width:1px;height:97px;background:#fff"></div>
<svg class="a" style="left:9px;top:469px" width="22" height="11"><polygon points="0.5,0.5 15.5,0.5 20.5,5.5 15.5,10.5 0.5,10.5" fill="#d4d0c8" stroke="none"/><path d="M0.5 10V0.5H15.5L20.5 5.5" stroke="#fff" fill="none"/><path d="M1 9.5H15L19.5 5.5" stroke="#808080" fill="none"/><path d="M20.5 5.5L15.5 10.5H0.5" stroke="#404040" fill="none"/></svg>
<div class="a" style="left:46px;top:443px;width:1px;height:97px;background:#808080"></div>
<div class="a" style="left:47px;top:443px;width:1px;height:97px;background:#404040"></div>
<div class="a" style="left:48px;top:443px;width:1px;height:97px;background:#d4d0c8"></div>
<div class="a" style="left:49px;top:443px;width:1px;height:97px;background:#fff"></div>
<svg class="a" style="left:39px;top:469px" width="22" height="11"><polygon points="0.5,0.5 15.5,0.5 20.5,5.5 15.5,10.5 0.5,10.5" fill="#d4d0c8" stroke="none"/><path d="M0.5 10V0.5H15.5L20.5 5.5" stroke="#fff" fill="none"/><path d="M1 9.5H15L19.5 5.5" stroke="#808080" fill="none"/><path d="M20.5 5.5L15.5 10.5H0.5" stroke="#404040" fill="none"/></svg>
<div class="lbl" style="left:1427px;top:424px">Ys</div>
<div class="lbl" style="left:1457px;top:424px">Yz</div>
<div class="a" style="left:1431px;top:443px;width:1px;height:97px;background:#808080"></div>
<div class="a" style="left:1432px;top:443px;width:1px;height:97px;background:#404040"></div>
<div class="a" style="left:1433px;top:443px;width:1px;height:97px;background:#d4d0c8"></div>
<div class="a" style="left:1434px;top:443px;width:1px;height:97px;background:#fff"></div>
<svg class="a" style="left:1424px;top:463px" width="22" height="11"><polygon points="0.5,0.5 15.5,0.5 20.5,5.5 15.5,10.5 0.5,10.5" fill="#d4d0c8" stroke="none"/><path d="M0.5 10V0.5H15.5L20.5 5.5" stroke="#fff" fill="none"/><path d="M1 9.5H15L19.5 5.5" stroke="#808080" fill="none"/><path d="M20.5 5.5L15.5 10.5H0.5" stroke="#404040" fill="none"/></svg>
<div class="a" style="left:1461px;top:443px;width:1px;height:97px;background:#808080"></div>
<div class="a" style="left:1462px;top:443px;width:1px;height:97px;background:#404040"></div>
<div class="a" style="left:1463px;top:443px;width:1px;height:97px;background:#d4d0c8"></div>
<div class="a" style="left:1464px;top:443px;width:1px;height:97px;background:#fff"></div>
<svg class="a" style="left:1454px;top:529px" width="22" height="11"><polygon points="0.5,0.5 15.5,0.5 20.5,5.5 15.5,10.5 0.5,10.5" fill="#d4d0c8" stroke="none"/><path d="M0.5 10V0.5H15.5L20.5 5.5" stroke="#fff" fill="none"/><path d="M1 9.5H15L19.5 5.5" stroke="#808080" fill="none"/><path d="M20.5 5.5L15.5 10.5H0.5" stroke="#404040" fill="none"/></svg>
<div class="a" style="left:64px;top:426px;width:362px;height:37px;background:#e0ffff;font-size:32.4px;line-height:37px;text-align:center">40 020 000 Hz</div>
<div class="a" style="left:428px;top:433px;width:107px;height:23px;background:#e0ffff;border:1px solid;border-color:#808080 #fff #fff #808080;box-shadow:inset 1px 1px 0 #404040, inset -1px -1px 0 #d4d0c8;font-size:13px;line-height:21px;padding-left:5px"><span class="q" style="display:inline-block">40020000</span></div>
<div class="btn " style="left:537px;top:432px;width:53px"><span class="t">Dn</span></div>
<div class="btn " style="left:590px;top:432px;width:54px"><span class="t">Up</span></div>
<div class="btn " style="left:668px;top:432px;width:62px"><span class="t">Split</span></div>
<div class="btn " style="left:784px;top:432px;width:62px"><span class="t">RIT</span></div>
<div class="lbl" style="left:870px;top:424px">-2000</div>
<div class="lbl" style="left:1029px;top:424px">0</div>
<div class="lbl" style="left:1169px;top:424px">2000</div>
<div class="a" style="left:879px;top:452px;width:309px;height:1px;background:#808080"></div>
<div class="a" style="left:879px;top:453px;width:309px;height:1px;background:#404040"></div>
<div class="a" style="left:879px;top:454px;width:309px;height:1px;background:#d4d0c8"></div>
<div class="a" style="left:879px;top:455px;width:309px;height:1px;background:#fff"></div>
<svg class="a" style="left:1028px;top:445px" width="11" height="21"><polygon points="0.5,0.5 10.5,0.5 10.5,15.5 5.5,20.5 0.5,15.5" fill="#d4d0c8"/><path d="M5.5 20.5L0.5 15.5V0.5H10.5" stroke="#fff" fill="none"/><path d="M10.5 0.5V15.5L5.5 20.5" stroke="#404040" fill="none"/></svg>
<div class="a" style="left:1198px;top:432px;width:216px;height:25px;background:#e0ffff;border:2px solid #5ca8ea;font-size:17px;line-height:21px;text-align:center;white-space:pre"><span style="display:inline-block;filter:url(#th4)">S 0   -112.86 dB</span></div>
<div class="btn " style="left:64px;top:469px;width:107px"><span class="t">Audio</span></div>
<div class="btn " style="left:173px;top:469px;width:107px"><span class="t">160</span></div>
<div class="btn " style="left:282px;top:469px;width:144px"><span class="t">80</span></div>
<div class="btn " style="left:428px;top:469px;width:107px"><span class="t">60</span></div>
<div class="btn " style="left:537px;top:469px;width:107px"><span class="t">40</span></div>
<div class="btn chk" style="left:646px;top:469px;width:107px"><span class="t">30</span></div>
<div class="btn " style="left:762px;top:469px;width:107px"><span class="t">CWL</span></div>
<div class="btn cyc" style="left:871px;top:469px;width:107px"><span class="t">USB</span></div>
<div class="btn " style="left:980px;top:469px;width:107px"><span class="t">AM</span></div>
<div class="btn " style="left:1089px;top:469px;width:107px"><span class="t">FM</span></div>
<div class="btn " style="left:1198px;top:469px;width:107px"><span class="t">WFM</span></div>
<div class="btn " style="left:1307px;top:469px;width:107px"><span class="t">IMD</span></div>
<div class="btn " style="left:64px;top:496px;width:107px"><span class="t">20</span></div>
<div class="btn " style="left:173px;top:496px;width:107px"><span class="t">17</span></div>
<div class="btn " style="left:282px;top:496px;width:144px"><span class="t">15</span></div>
<div class="btn " style="left:428px;top:496px;width:107px"><span class="t">12</span></div>
<div class="btn " style="left:537px;top:496px;width:107px"><span class="t">10</span></div>
<div class="btn " style="left:646px;top:496px;width:107px"><span class="t">Time</span></div>
<div class="btn " style="left:762px;top:496px;width:107px"><span class="t">1800</span></div>
<div class="btn " style="left:871px;top:496px;width:107px"><span class="t">2000</span></div>
<div class="btn " style="left:980px;top:496px;width:107px"><span class="t">2200</span></div>
<div class="btn " style="left:1089px;top:496px;width:107px"><span class="t">2500</span></div>
<div class="btn chk" style="left:1198px;top:496px;width:107px"><span class="t">2800</span></div>
<div class="btn " style="left:1307px;top:496px;width:107px"><span class="t">6000</span></div>
<div class="btn " style="left:64px;top:523px;width:107px"><span class="t">Mute</span></div>
<div class="btn cyc" style="left:173px;top:523px;width:107px"><span class="t">AGC 1</span></div>
<div class="btn " style="left:282px;top:523px;width:144px"><span class="t"></span></div>
<div class="btn " style="left:428px;top:523px;width:107px"><span class="t">RF 0 dB</span></div>
<div class="btn " style="left:537px;top:523px;width:107px"><span class="t">FDX</span></div>
<div class="btn " style="left:646px;top:523px;width:107px"><span class="t">Test 1</span></div>
<div class="btn cyc" style="left:762px;top:523px;width:107px"><span class="t">GraphP3</span></div>
<div class="btn " style="left:871px;top:523px;width:107px"><span class="t">WFall</span></div>
<div class="btn " style="left:980px;top:523px;width:107px"><span class="t">Scope</span></div>
<div class="btn " style="left:1089px;top:523px;width:107px"><span class="t">Config</span></div>
<div class="btn " style="left:1198px;top:523px;width:107px"><span class="t">RX Filter</span></div>
<div class="btn " style="left:1307px;top:523px;width:107px"><span class="t">Help</span></div></body></html>
